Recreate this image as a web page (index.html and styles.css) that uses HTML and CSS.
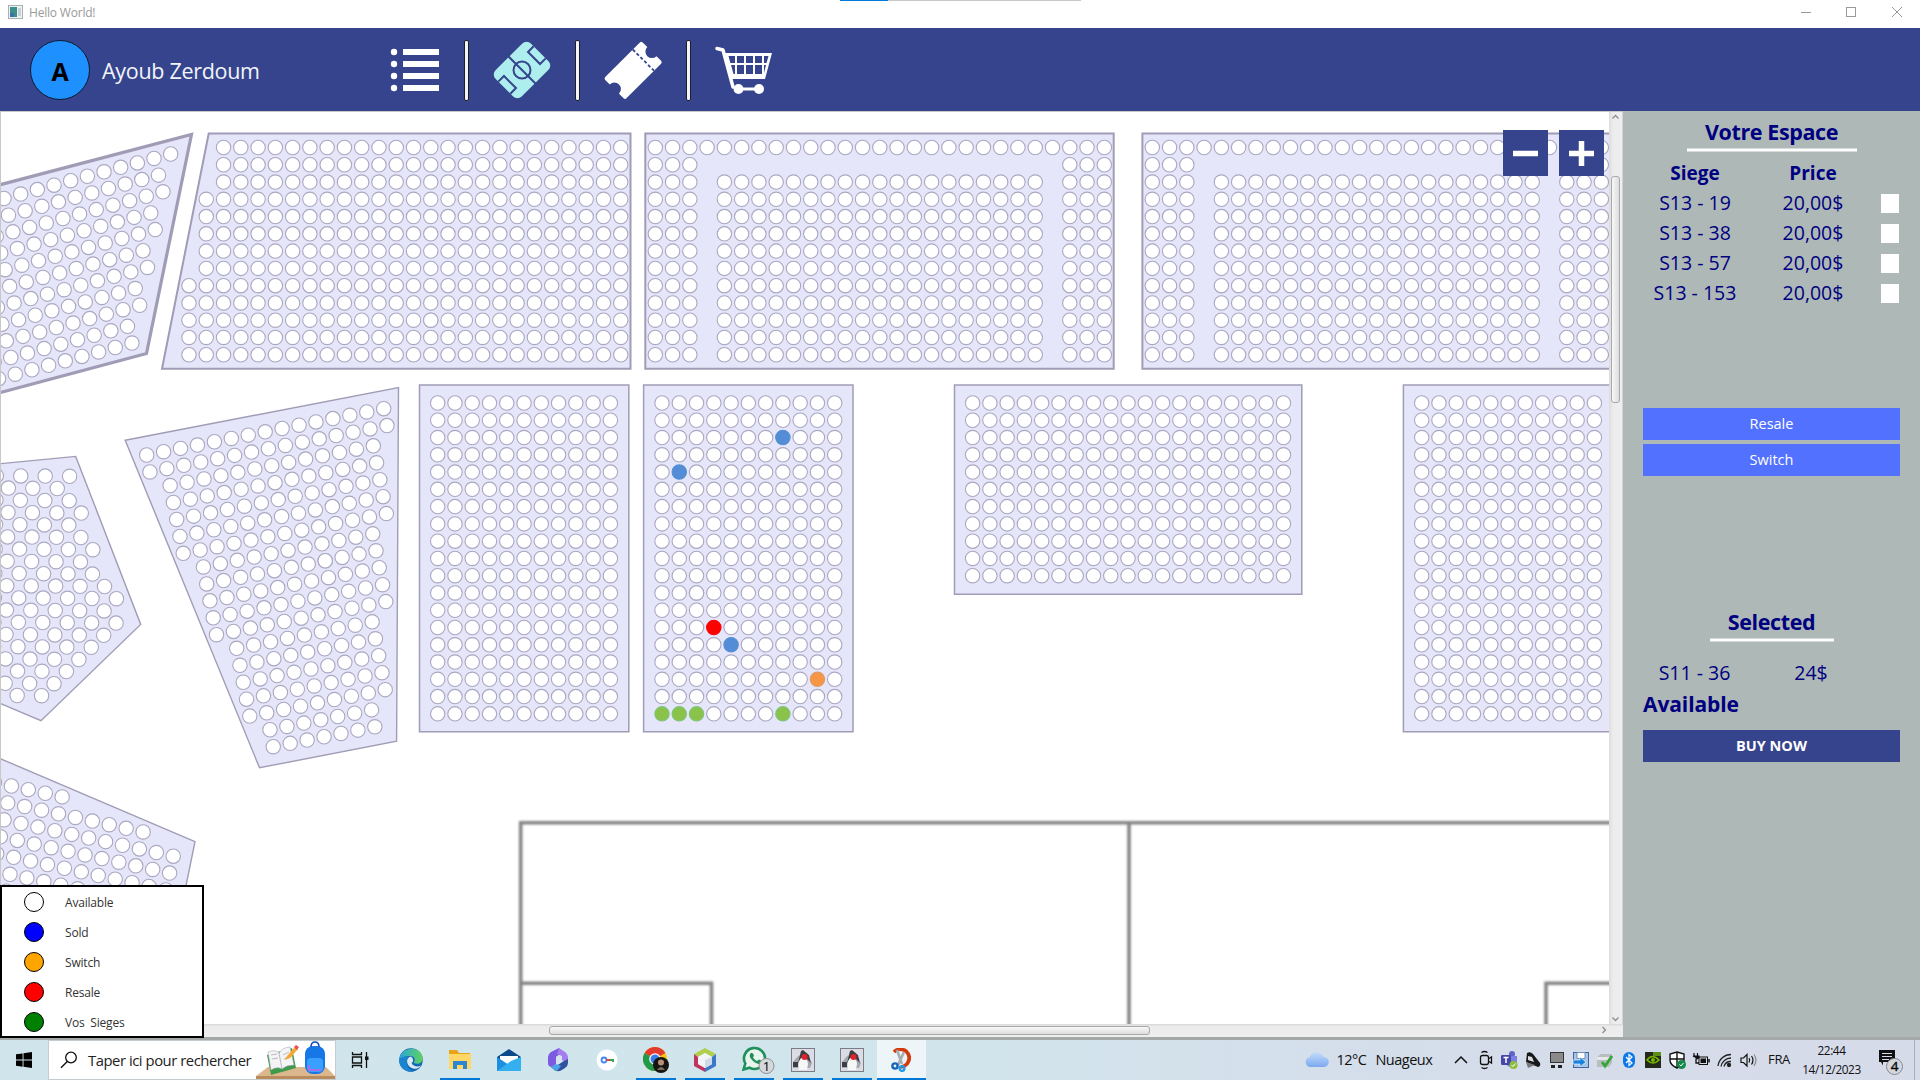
FILE: index.html
```html
<!DOCTYPE html>
<html lang="fr">
<head>
<meta charset="utf-8">
<title>Hello World!</title>
<link rel="stylesheet" href="styles.css">
</head>
<body>
<div class="window">
  <div class="titlebar">
    <div class="snip-strip"></div>
    <svg class="app-icon" width="16" height="15" viewBox="0 0 16 15"><rect x=".5" y=".5" width="14" height="13" fill="#eef1f2" stroke="#a9b0b3"/><rect x="2" y="2" width="7" height="10" fill="#3d8f8b"/><rect x="2" y="8" width="4" height="4" fill="#3c6fa8"/><rect x="10" y="3" width="3" height="8" fill="#c9d3d6"/></svg>
    <span class="title">Hello World!</span>
    <div class="controls">
      <svg width="46" height="24" viewBox="0 0 46 24"><path d="M19 12.500h10" stroke="#999"/></svg>
      <svg width="46" height="24" viewBox="0 0 46 24"><rect x="18.500" y="7.500" width="9" height="9" fill="none" stroke="#999"/></svg>
      <svg width="46" height="24" viewBox="0 0 46 24"><path d="M18 7l10 10M28 7l-10 10" stroke="#999"/></svg>
    </div>
  </div>

  <header class="header">
    <div class="avatar">A</div>
    <div class="user">Ayoub Zerdoum</div>
    <nav class="nav">
      <svg width="104" height="60" viewBox="0 0 104 60" fill="#fff"><circle cx="34" cy="12" r="3.200"/><circle cx="34" cy="24" r="3.200"/><circle cx="34" cy="36" r="3.200"/><circle cx="34" cy="48" r="3.200"/><path d="M43 9h36v6H43zM43 21h36v6H43zM43 33h36v6H43zM43 45h36v6H43z"/></svg>
      <span class="sep"></span>
      <svg width="106" height="60" viewBox="0 0 106 60"><g transform="translate(53 30) rotate(-45)"><rect x="-25" y="-18.500" width="50" height="37" rx="6" fill="#afeeee"/><g fill="none" stroke="#35448c" stroke-width="2"><path d="M0-19V-8.500M0 8.500V19M-25-8.500h8v17h-8M25-8.500h-8v17h8"/><circle r="8.500"/><path d="M0-8.500V8.500"/></g></g></svg>
      <span class="sep"></span>
      <svg width="106" height="60" viewBox="0 0 106 60"><g transform="translate(53.500 30) rotate(-45)"><path d="M-25-15H24q2 0 2 2V-6.500a6.500 6.500 0 0 0 0 13V13q0 2-2 2H-25q-2 0-2-2V6.500a6.500 6.500 0 0 0 0-13V-13q0-2 2-2z" fill="#fff"/><path d="M14-15V15" stroke="#35448c" stroke-width="1.800" stroke-dasharray="3.200 2.200"/></g></svg>
      <span class="sep"></span>
      <svg width="106" height="60" viewBox="0 0 106 60"><path d="M26 8.500l6 1.500 10 37" fill="none" stroke="#fff" stroke-width="3.500" stroke-linecap="round" stroke-linejoin="round"/><path d="M34 13h47l-7 26H41z" fill="#fff"/><g fill="#35448c"><path d="M37.500 16h6.500v7h-4.600zM46 16h7v7h-7zM55 16h7v7h-7zM64 16h7v7h-7zM73 16h4.500l-2 7H73zM40 25h4v9h-1.500zM46 25h7v9h-7zM55 25h7v9h-7zM64 25h7v9h-7zM73 25h2l-2 8z"/></g><path d="M46 49h20" stroke="#fff" stroke-width="3"/><circle cx="47.500" cy="49" r="5" fill="#fff"/><circle cx="68" cy="49" r="5" fill="#fff"/></svg>
    </nav>
  </header>

  <main class="main">
    <section class="map">
      <svg id="stadium" class="stadium" width="1608" height="912" viewBox="1 112 1608 912">
        <g class="field">
          <path d="M520.700 1040V822.700H1640M1129 822.700V1040M520.700 983.300H711.500V1040M1546 1040V983.300H1640"/>
        </g>
      </svg>
      <div class="vscroll">
        <svg width="13" height="10" viewBox="0 0 13 10"><path d="M3.500 6.500L6.500 3.500l3 3" fill="none" stroke="#8c8c8c" stroke-width="1.300"/></svg>
        <div class="vthumb"></div>
        <svg width="13" height="10" viewBox="0 0 13 10"><path d="M3.500 3.500L6.500 6.500l3-3" fill="none" stroke="#8c8c8c" stroke-width="1.300"/></svg>
      </div>
      <div class="hscroll">
        <div class="hthumb"></div>
        <svg width="10" height="12" viewBox="0 0 10 12"><path d="M3.500 3l3 3-3 3" fill="none" stroke="#8c8c8c" stroke-width="1.300"/></svg>
      </div>
      <div class="zoom">
        <button class="zoom-btn"><svg width="25" height="25"><path d="M0 12.500h25" stroke="#fff" stroke-width="5.500"/></svg></button>
        <button class="zoom-btn"><svg width="25" height="25"><path d="M0 12.500h25M12.500 0v25" stroke="#fff" stroke-width="5.500"/></svg></button>
      </div>
      <ul class="legend">
        <li><i class="dot available"></i>Available</li>
        <li><i class="dot sold"></i>Sold</li>
        <li><i class="dot switch"></i>Switch</li>
        <li><i class="dot resale"></i>Resale</li>
        <li><i class="dot mine"></i>Vos&nbsp; Sieges</li>
      </ul>
    </section>

    <aside class="side">
      <h2 class="heading space-title">Votre Espace</h2>
      <div class="rule wide"></div>
      <div class="seats">
        <b>Siege</b><b>Price</b><span></span>
        <span>S13 - 19</span><span>20,00$</span><i class="check"></i>
        <span>S13 - 38</span><span>20,00$</span><i class="check"></i>
        <span>S13 - 57</span><span>20,00$</span><i class="check"></i>
        <span>S13 - 153</span><span>20,00$</span><i class="check"></i>
      </div>
      <div class="actions">
        <button class="btn">Resale</button>
        <button class="btn">Switch</button>
      </div>
      <h2 class="heading selected-title">Selected</h2>
      <div class="rule narrow"></div>
      <div class="picked"><span>S11 - 36</span><span>24$</span></div>
      <div class="status">Available</div>
      <button class="btn buy">BUY NOW</button>
    </aside>
  </main>
</div>

<footer class="taskbar">
  <div class="start"><svg width="16" height="16" viewBox="0 0 16 16"><path d="M0 2.300L6.600 1.400V7.600H0zM7.500 1.200L16 0V7.600H7.500zM0 8.500H6.600V14.700L0 13.700zM7.500 8.500H16V16L7.500 14.800z"/></svg></div>
  <div class="search">
    <svg width="18" height="18" viewBox="0 0 18 18"><circle cx="11" cy="6.500" r="5.300" fill="none" stroke="#111" stroke-width="1.300"/><path d="M7.300 10.500L1 16.800" stroke="#111" stroke-width="1.400"/></svg>
    <span>Taper ici pour rechercher</span>
    <svg class="art" width="79" height="38" viewBox="0 0 79 38"><path d="M12 26h58l9 9v3H0v-3z" fill="#dcb78d"/><path d="M0 35h79v3H0z" fill="#b98c5e"/><path d="M11 14l25-7 4 20-25 7z" fill="#3f9a4b"/><path d="M12 11q8-3 11 1 4-6 11-6l4 18q-8 0-12 4-5-3-11 1z" fill="#f4f4f6" stroke="#aab" stroke-width=".6"/><path d="M23 12l3 16M15 14l6-1M16 18l6-1M27 14l6-3M28 18l6-3" stroke="#a9aab5" stroke-width=".8"/><path d="M29 19l2-4 8-9 3 2-8 9z" fill="#f6a72d"/><path d="M38 6l2-2 3 2-2 3z" fill="#e8505b"/><rect x="49" y="5" width="20" height="28" rx="8" fill="#1877e6"/><path d="M55 6q0-5 4-5t4 5" fill="none" stroke="#0b4fb8" stroke-width="1.500"/><rect x="51" y="17" width="16" height="14" rx="4" fill="#3aa0ff"/><path d="M53 24v5h12" fill="none" stroke="#cb5fe0" stroke-width="1.500"/></svg>
  </div>
  <div class="taskview"><svg width="18" height="16" viewBox="0 0 18 16"><path d="M1.500 0v2.500h9V0M1.500 16v-2.500h9V16M1.500 5h9v6h-9zM15.500 0v16" fill="none" stroke="#111" stroke-width="1.300"/><rect x="14" y="4.500" width="3.500" height="3.500" fill="#111"/></svg></div>

  <div class="app"><svg width="24" height="24" viewBox="0 0 24 24"><defs><linearGradient id="eg" x1="0" x2="1"><stop offset="0" stop-color="#2aa5dd"/><stop offset="1" stop-color="#5fd35c"/></linearGradient></defs><circle cx="12" cy="12" r="11.800" fill="#1467b4"/><path d="M.5 11C2-2 22-3 23.700 10c.3 5-5 7-9 5 2-3 1-7-3-7-5 0-9 1-11.200 3z" fill="url(#eg)"/><path d="M12 8.500c-6 1-5 10 2 12 4 1 7-1 8-3-3 2-8 1-9.500-2.500 2-1 2.500-4-.5-6.500z" fill="#d7e8ef"/><path d="M10 9c-5 4-2 13 5 14.500-6 1.500-14-2-14.800-10C1 9 6 8 10 9z" fill="#1b84d0"/></svg></div>
  <div class="app on"><svg width="24" height="22" viewBox="0 0 24 22"><path d="M1 1h8l2 3h11v8H1z" fill="#e8a317"/><path d="M1 5h22v15H1z" fill="#ffd766"/><path d="M5 12h14v8h-4v-4H9v4H5z" fill="#2e86d0"/></svg></div>
  <div class="app"><svg width="24" height="22" viewBox="0 0 24 22"><path d="M12 0l12 8v2H0V8z" fill="#0c4a8c"/><path d="M3 7h18v8H3z" fill="#fff"/><path d="M0 8l12 8 12-8v14H0z" fill="#1c8fe0"/><path d="M0 22l14-10 10-4v14z" fill="#34b0f0"/></svg></div>
  <div class="app"><svg width="22" height="24" viewBox="0 0 22 24"><path d="M12 0L4 4Q1 6 1 9v6q0 4 4 4l4-3V9l6-4z" fill="#7c5be0"/><path d="M12 0l6 4q3 2 3 5v6l-6-3V8l-5-2z" fill="#a57cf0"/><path d="M21 11v4q0 3-3 5l-4 2.500q-3 1.500-6 0L4 19h4l7-5z" fill="#31539f"/><path d="M4 19l5-3 5 2-4 5q-3-1-6-4z" fill="#4ca4e8"/><path d="M9 9l3-2 3 2v5l-3 2-3-1z" fill="#d5e5ee"/></svg></div>
  <div class="app"><svg width="22" height="22" viewBox="0 0 22 22"><circle cx="11" cy="11" r="10.500" fill="#fff"/><circle cx="8" cy="11" r="2.500" fill="none" stroke="#4285f4" stroke-width="1.800"/><path d="M10.500 11H14" stroke="#ea4335" stroke-width="2"/><path d="M14 11h3v2" fill="none" stroke="#34a853" stroke-width="2"/></svg></div>
  <div class="app on"><svg width="26" height="26" viewBox="0 0 26 26"><circle cx="12" cy="12" r="12" fill="#fbc116"/><path d="M12 12L1.600 6A12 12 0 0 1 22.400 6z" fill="#e33b2e"/><path d="M1.600 6A12 12 0 0 0 12 24l5-9-5-3z" fill="#229a4a"/><circle cx="12" cy="12" r="5.800" fill="#fff"/><circle cx="12" cy="12" r="4.500" fill="#3b7de8"/><circle cx="18" cy="18" r="8" fill="#16150f"/><circle cx="18" cy="15.500" r="3" fill="#b99076"/><path d="M14 23q4-6 8 0z" fill="#777060"/></svg></div>
  <div class="app on"><svg width="22" height="24" viewBox="0 0 22 24"><path d="M11 0l11 6-4 3-7-4-7 4-4-3z" fill="#b0cf4c"/><path d="M0 6l4 3v7l7 4v4L0 18z" fill="#c2335d"/><path d="M22 6l-4 3v7l-7 4v4l11-6z" fill="#3b78c9"/><path d="M11 5l7 4v7l-7 4-7-4V9z" fill="#f2f5f8"/><path d="M11 12l7-3v7l-7 4z" fill="#cfdbe6"/></svg></div>
  <div class="app on"><svg class="wa" width="34" height="28" viewBox="0 0 34 28"><path d="M1.500 23.500l1.800-6a10.500 10.500 0 1 1 4.200 4.200z" fill="#e8f4ee" stroke="#1f8f5b" stroke-width="2.600"/><path d="M8.500 7.500q2-2 3.500 2l-1 2q2 3 4 3.500l2-1.500q4 1.500 2 3.500-3 2.500-8-2t-2.500-7.500z" fill="#1f8f5b"/><circle cx="24.500" cy="20" r="7.500" fill="#d5d9db" stroke="#8a8f93"/><text x="24.500" y="24.500" text-anchor="middle" font-size="13">1</text></svg></div>
  <div class="app on"><svg width="24" height="24" viewBox="0 0 24 24"><rect x=".5" y=".5" width="23" height="23" fill="#dcdde4" stroke="#7a7d88"/><path d="M2 14l5-6 5-2 9 9-2 5H2z" fill="#a4a7ae"/><path d="M10 3l2-1 6 5 2 8-4-4-6 0-3 4z" fill="#3c3e44"/><path d="M2 14h5v5H2z" fill="#3c3e44"/><path d="M10 10q7 0 7 6l-1 6H8q-2-7 2-12z" fill="#f7f7f7"/><circle cx="13.500" cy="9" r="3" fill="#e0242a"/></svg></div>
  <div class="app on"><svg width="24" height="24" viewBox="0 0 24 24"><rect x=".5" y=".5" width="23" height="23" fill="#dcdde4" stroke="#7a7d88"/><path d="M2 14l5-6 5-2 9 9-2 5H2z" fill="#a4a7ae"/><path d="M10 3l2-1 6 5 2 8-4-4-6 0-3 4z" fill="#3c3e44"/><path d="M2 14h5v5H2z" fill="#3c3e44"/><path d="M10 10q7 0 7 6l-1 6H8q-2-7 2-12z" fill="#f7f7f7"/><circle cx="13.500" cy="9" r="3" fill="#e0242a"/></svg></div>
  <div class="app on active"><svg width="20" height="24" viewBox="0 0 20 24"><path d="M3 4Q8-1 15 3q6 6 1 13-3 3-6 3" fill="none" stroke="#d43a0b" stroke-width="3.600"/><path d="M6 2l5 14M13 4L7 17" stroke="#a8adb2" stroke-width="2.600"/><circle cx="4" cy="18" r="2.600" fill="none" stroke="#1565b8" stroke-width="2.400"/><circle cx="11" cy="20.500" r="2.400" fill="none" stroke="#1e9be8" stroke-width="2.400"/></svg></div>

  <div class="weather"><svg width="26" height="17" viewBox="0 0 26 17"><defs><linearGradient id="cl" x2="0" y2="1"><stop offset="0" stop-color="#c4dbfb"/><stop offset="1" stop-color="#7ba9ee"/></linearGradient></defs><path d="M6 16a5 5 0 0 1-.5-9.800A7.500 7.500 0 0 1 19.500 6 5 5 0 0 1 20 16z" fill="url(#cl)"/></svg><span>12°C</span><span class="sky">Nuageux</span></div>
  <div class="tray">
    <svg viewBox="0 0 24 24"><path d="M6 15l6-6 6 6" fill="none" stroke="#111" stroke-width="1.500"/></svg>
    <svg viewBox="0 0 24 24" fill="none" stroke="#111" stroke-width="1.300"><rect x="7.500" y="7.500" width="8" height="9" rx="2"/><path d="M16 10.500l2.500-1.500v6L16 13.500M8.500 4.500q3-2 6 0M8.500 19.500q3 2 6 0"/></svg>
    <svg viewBox="0 0 24 24"><circle cx="15" cy="6" r="3" fill="#6264c7"/><path d="M10 8h10v6q-1 5-6 5-4 0-5-4z" fill="#7b7fe0"/><rect x="4" y="7" width="10" height="10" rx="1" fill="#4447a8"/><path d="M6.500 9.500h5M9 9.500V15" stroke="#fff" stroke-width="1.500"/><circle cx="16.500" cy="17" r="4" fill="#8cbd3c"/><path d="M14.500 17l1.500 1.500 2.500-3" fill="none" stroke="#fff"/></svg>
    <svg viewBox="0 0 24 24"><path d="M6 5q3-2 6 1l7 9q1 3-2 4L5 14z" fill="#16181b"/><path d="M7 8l4 1 2 5-6-2z" fill="#ddd"/><path d="M5 14l9 3-7 3z" fill="#777"/></svg>
    <svg viewBox="0 0 24 24"><rect x="5.500" y="4.500" width="13" height="10" fill="#8a8a8a" stroke="#333"/><path d="M6 17h4v3H6zM13 17h4v3h-4z" fill="#222"/></svg>
    <svg viewBox="0 0 24 24"><rect x="4.500" y="4.500" width="15" height="15" fill="#a9c4e6" stroke="#3f66a0"/><path d="M8 4.500h8v6H8z" fill="#fff" stroke="#6f8fbd"/><path d="M4 12h7V9l6 5-6 5v-3H4z" fill="#1884e0" stroke="#fff" stroke-width=".6"/></svg>
    <svg viewBox="0 0 24 24"><path d="M4 9l4-3h11v9l-3 4H4z" fill="#b9bdbf"/><path d="M4 9h12v3H4z" fill="#e6e8e8"/><path d="M9 14l3 4 7-10" fill="none" stroke="#33a636" stroke-width="2.800"/></svg>
    <svg viewBox="0 0 24 24"><rect x="6" y="4" width="12" height="16" rx="6" fill="#0a78e8"/><path d="M9 9l6 6-3 2.500V6.500L15 9l-6 6" fill="none" stroke="#fff" stroke-width="1.200"/></svg>
    <svg viewBox="0 0 24 24"><rect x="4" y="4" width="16" height="16" fill="#222a1c"/><path d="M6 12q5-7 12 0-6 6-12 0z" fill="none" stroke="#76b900" stroke-width="1.600"/><circle cx="12" cy="12" r="2" fill="#76b900"/><path d="M12 4h8v4h-8z" fill="#5d8d17"/></svg>
    <svg viewBox="0 0 24 24"><path d="M12 4l7 2v6q0 5-7 8-7-3-7-8V6z" fill="#fff" stroke="#111" stroke-width="1.400"/><path d="M12 4v16M5 11h14" stroke="#111" stroke-width="1.400"/><circle cx="16.500" cy="16.500" r="4.500" fill="#13894a"/><path d="M14.500 16.500l1.500 1.500 2.500-3" fill="none" stroke="#fff"/></svg>
    <svg viewBox="0 0 24 24"><path d="M5 5v3M8.500 5v3M4 8h6v1.500q-3 3-3 0z" fill="#111" stroke="#111" stroke-width="1.200"/><path d="M7 11v4h3" fill="none" stroke="#111" stroke-width="1.300"/><rect x="10" y="9" width="8.500" height="7.500" fill="none" stroke="#111"/><rect x="11.500" y="10.500" width="5.500" height="4.500" fill="#111"/><path d="M20 11v3.500" stroke="#111" stroke-width="1.500"/></svg>
    <svg viewBox="0 0 24 24" fill="none" stroke="#222" stroke-width="1.300"><path d="M5 18A13 13 0 0 1 18 6.500M8 18.500A10 10 0 0 1 18 10M11 18.500A7 7 0 0 1 18 13.500"/><circle cx="16" cy="17" r="1.500" fill="#222"/></svg>
    <svg viewBox="0 0 24 24" fill="none" stroke="#111" stroke-width="1.200"><path d="M4 10v4.500h2.500L10 18V6.500L6.500 10zM12 10q1.500 2 0 4.500M14.500 8q3 4 0 8.500"/><path d="M17 6.500q4 5.500 0 11.500" stroke="#888"/></svg>
  </div>
  <div class="lang">FRA</div>
  <div class="clock"><span>22:44</span><span>14/12/2023</span></div>
  <div class="notif"><svg width="28" height="28" viewBox="0 0 28 28"><path d="M2 2h16v12H6v3.500L4 14H2z" fill="#111"/><path d="M5 5.500h10M5 8.500h10M5 11.500h7" stroke="#d6dce9" stroke-width="1.200"/><circle cx="17.500" cy="18.500" r="8" fill="#d3d7dc" stroke="#85898e"/><text x="17.500" y="23.300" text-anchor="middle" font-size="13.500" stroke="#111" stroke-width=".4">4</text></svg></div>
</footer>
<script src="stadium.js"></script>
</body>
</html>
```
FILE: styles.css
```css
* { box-sizing: border-box; }
body {
  margin: 0;
  width: 1920px;
  height: 1080px;
  overflow: hidden;
  display: flex;
  flex-direction: column;
  background: #fff;
  font-family: "Open Sans", "Noto Sans", sans-serif;
}
svg { display: block; flex: none; }
button { border: 0; padding: 0; font-family: inherit; }

.window {
  height: 1040px;
  display: flex;
  flex-direction: column;
  border-bottom: 3px solid #a5a8a8;
}

.titlebar { position: relative; height: 28px; display: flex; align-items: flex-start; padding-left: 8px; color: #999; }
.app-icon { margin-top: 5px; }
.title { margin: 4px 0 0 5px; font-size: 12px; line-height: 17px; letter-spacing: -.2px; }
.controls { display: flex; margin-left: auto; }
.snip-strip { position: absolute; top: 0; left: 840px; width: 241px; height: 1px; background: linear-gradient(90deg, #0078d7 48px, #c9c9c9 48px); }

.header { height: 83px; display: flex; align-items: flex-start; padding: 12px 0 0 30px; background: #35448c; }
.avatar { width: 60px; height: 60px; border: 1px solid #0b1b33; border-radius: 50%; background: #1e90ff; text-align: center; font-weight: 700; font-size: 25px; line-height: 61px; }
.user { width: 258px; margin-left: 12px; color: #f2f4fa; font-size: 21.500px; line-height: 61px; letter-spacing: -.3px; }
.nav { display: flex; }
.sep { width: 5px; height: 61px; background: #f4f4f4; border: 1px solid #1c1e2b; border-radius: 2px; }

.main { height: 926px; display: flex; }
.map {
  position: relative;
  width: 1623px;
  display: grid;
  grid-template: 912px 13px / 1608px 14px;
  border: 1px solid #c8c8c8;
  border-width: 1px 0 0 1px;
}
.stadium { background: #fff; }
.field { fill: none; stroke: #858585; stroke-width: 3.6px; filter: blur(1.2px); }
.section { fill: #e6e6fa; stroke: #a09cb5; }
.seat { fill: #fff; stroke: #aaa7c0; stroke-width: 1.1px; }
.seat.sold { fill: #538dd5; stroke: #538dd5; }
.seat.resale { fill: #f00; stroke: #f00; }
.seat.switch { fill: #f79646; stroke: #e09a66; }
.seat.mine { fill: #8bc34a; stroke: #7cc47b; }

.vscroll { height: 912px; display: flex; flex-direction: column; background: linear-gradient(90deg, #dcdcdc, #ececec 30%, #eee); border-right: 1px solid #d4d4d4; }
.vscroll svg:last-child { margin-top: auto; }
.vthumb { width: 9px; height: 227px; margin: 54px 0 0 2px; border: 1px solid #a9a9a9; border-radius: 3px; background: linear-gradient(90deg, #f8f8f8, #dcdcdc); }
.hscroll { grid-column: 1 / 3; display: flex; background: linear-gradient(#d8d8d8, #ececec 20%, #eee); }
.hthumb { width: 601px; height: 9px; margin: 2px 0 0 548px; border: 1px solid #a9a9a9; border-radius: 3px; background: linear-gradient(#f8f8f8, #dcdcdc); }
.hscroll svg { margin-left: 449px; }

.zoom { position: absolute; left: 1502px; top: 18px; display: flex; gap: 11px; }
.zoom-btn { width: 45px; height: 46px; display: grid; place-items: center; background: #35448c; }

.legend { position: absolute; left: -1px; bottom: -1px; width: 204px; height: 153px; margin: 0; padding: 0 0 0 22px; border: 2px solid #000; background: #fff; list-style: none; font-size: 12px; color: #333; }
.legend li { height: 30px; display: flex; align-items: center; letter-spacing: -.2px; }
.dot { width: 20px; height: 20px; margin-right: 21px; border: 1px solid #000; border-radius: 50%; }
.available { background: #fff; }
.dot.sold { background: #00f; }
.dot.switch { background: #ffa500; }
.dot.resale { background: #f00; }
.dot.mine { background: #008000; }

.side { width: 297px; display: flex; flex-direction: column; padding: 6px 20px 0; background: #aeb9b7; color: #000080; }
.heading { margin: 0; height: 30px; line-height: 30px; text-align: center; font-size: 21.500px; font-weight: 700; letter-spacing: -.4px; }
.rule { align-self: center; height: 4px; background: #fff; border: solid #d6dcdb; border-width: 1px 0; }
.wide { width: 170px; margin-top: 1px; }
.narrow { width: 124px; margin-top: 1px; }
.seats { height: 250px; margin-top: 6px; display: grid; grid-template-columns: 104px 132px 21px; grid-auto-rows: 30px; text-align: center; font-size: 19.500px; line-height: 30px; }
.seats b { font-size: 19px; }
.check { width: 18px; height: 19px; margin: 6px 0 0 2px; background: #fff; }
.actions { display: flex; flex-direction: column; gap: 4px; }
.btn { height: 32px; width: 257px; padding-bottom: 2px; background: #5271ff; color: #fff; font-size: 14.500px; flex: none; }
.space-title { flex: none; }
.selected-title { flex: none; margin-top: 131px; }
.narrow { margin-top: 1px; }
.picked { height: 31px; margin-top: 15px; display: grid; grid-template-columns: 103px 130px; text-align: center; font-size: 19.500px; line-height: 31px; }
.status { height: 32px; font-size: 21px; line-height: 32px; font-weight: 700; letter-spacing: -.1px; }
.buy { margin-top: 10px; background: #35448c; font-weight: 700; }

.taskbar { height: 40px; display: flex; align-items: stretch; background: linear-gradient(90deg, #cfe5eb, #d1e5ec 45%, #d5dcea 80%, #d6dbe9); color: #111; font-size: 14.500px; }
.start { width: 48px; display: grid; place-items: center; }
.search { width: 288px; display: flex; align-items: center; padding-left: 11px; border: 1px solid #c4ccd0; background: #fff; font-size: 14.800px; }
.search span { width: 173px; margin-left: 10px; white-space: nowrap; letter-spacing: -.45px; color: #222; }
.search .art { margin-left: -4px; }
.taskview { width: 50.500px; display: grid; place-items: center; }
.taskview svg { margin-right: 2px; }
.app { width: 49px; display: grid; place-items: center; background: linear-gradient(#0078d7, #0078d7) 50% 100% / 0 2px no-repeat; }
.app.on { background-size: 40px 2px; }
.app.active { background-color: #eef5f8; background-size: 49px 2px; }
.wa { margin-left: 10px; }
.weather { width: 523.500px; display: flex; align-items: center; padding: 0 0 2px 378px; white-space: nowrap; letter-spacing: -.5px; }
.weather span { margin-left: 7px; }
.weather .sky { margin-left: 9px; }
.tray { display: flex; align-items: center; }
.tray svg { width: 24px; height: 24px; }
.lang { width: 36px; text-align: center; line-height: 39px; font-size: 13px; letter-spacing: -.4px; }
.clock { width: 71px; display: flex; flex-direction: column; margin-left: -1px; margin-right: 1px; text-align: center; padding-top: 1px; font-size: 11.800px; line-height: 19px; letter-spacing: -.4px; }
.notif { width: 47px; display: grid; place-items: center; padding-top: 3px; border-right: 1px solid #aab0ba; }
```
FILE: stadium.js
```js
const NS = 'http://www.w3.org/2000/svg';
const svg = document.getElementById('stadium');

function add(name, attrs) {
  const el = document.createElementNS(NS, name);
  for (const key in attrs) el.setAttribute(key, attrs[key]);
  svg.appendChild(el);
}
function block(points, width) {
  add('polygon', { class: 'section', points, 'stroke-width': width });
}
function seat(x, y, kind) {
  add('circle', { class: 'seat ' + (kind || ''), cx: x.toFixed(2), cy: y.toFixed(2), r: 7.2 });
}
function rect(x1, y1, x2, y2, width) {
  block(`${x1},${y1} ${x2},${y1} ${x2},${y2} ${x1},${y2}`, width);
}

const STEP = 17.27;

// Slanted corner block, rows shorten towards the pitch
block('-20,190 191.500,134.500 146.500,353.500 -20,398', 3.2);
for (let r = 0; r <= 10; r++) {
  for (let c = Math.ceil(r / 2); c < 14; c++) seat(170.7 - 16.67 * c + 4.46 * r, 154 + 4.45 * c + 16.68 * r);
}

// Upper stand
block('208.700,133.500 630.500,133.500 630.500,368.700 162,368.700', 2);
for (let r = 0; r < 13; r++) {
  for (let c = r < 3 ? 2 : r < 8 ? 1 : 0; c < 26; c++) seat(189 + STEP * c, 147.5 + STEP * r);
}
seat(189 + STEP * 14, 147.5 + STEP * 10);
for (const [left, first] of [[645.3, 655.3], [1142.4, 1152.3]]) {
  rect(left, 133.5, left + 468.4, 368.7, 2);
  for (let r = 0; r < 13; r++) {
    for (let c = 0; c < 27; c++) {
      const aisle = (r === 1 && c > 2 && c < 24) || (r > 1 && (c === 3 || c === 23));
      if (!aisle) seat(first + STEP * c, 147.5 + STEP * r);
    }
  }
  seat(first + STEP * 15, 147.5 + STEP * 10);
}

// Lower corner block: first and last seat of each row
block('125.200,440.300 398.500,387.500 396.600,741.200 259.500,767.800', 1.4);
const span = [[0, 14], [0, 14], [1, 13], [1, 13], [1, 13], [1, 13], [1, 13], [2, 12], [2, 12], [2, 12], [2, 12], [2, 12],
  [3, 11], [3, 11], [3, 11], [3, 11], [3, 11], [4, 10], [4, 10]];
span.forEach(([from, to], r) => {
  for (let c = from; c <= to; c++) seat(146.67 + 16.93 * c + 3.27 * r, 455 - 3.31 * c + 16.94 * r);
});
seat(146.67 + 16.93 * 9 + 3.27 * 8, 455 - 3.31 * 9 + 16.94 * 8);

// Left block with staggered seats
block('-20,465.700 75.700,456.400 140.700,624.400 41,720.700 -20,695', 1.4);
[2, 2, 2, 3, 2, 3, 3, 3, 3, 4, 4, 4, 4, 4, 3, 3, 2, 2, 1].forEach((last, r) => {
  for (let c = -1; c <= last; c++) seat(20.75 - 0.2 * r - (r % 2 ? 12.17 : 0) + 24.43 * c, 475.9 + 12.2 * r + 0.2 * c);
});

// Bottom-left block
block('-20,750 195,841.700 180,915 -20,915', 1.4);
[3, 8, 10, 10, 10, 10, 10].forEach((last, r) => {
  for (let c = -1; c <= last; c++) seat(11.4 + 16.92 * c - 3.67 * r, 786 + 3.63 * c + 16.93 * r);
});

// Lower stand
const states = { '7,2': 'sold', '1,4': 'sold', '3,13': 'resale', '4,14': 'sold', '9,16': 'switch',
  '0,18': 'mine', '1,18': 'mine', '2,18': 'mine', '7,18': 'mine' };
const stands = [
  [419.5, 628.8, 731.7, 437.7, 11, 19, {}],
  [643.6, 853, 731.7, 662, 11, 19, states],
  [954.5, 1301.8, 594.3, 972.6, 19, 11, {}],
  [1403.4, 1613, 731.7, 1421.7, 11, 19, {}]
];
for (const [x1, x2, y2, first, cols, rows, kinds] of stands) {
  rect(x1, 385, x2, y2, 1.5);
  for (let r = 0; r < rows; r++) {
    for (let c = 0; c < cols; c++) seat(first + STEP * c, 403 + STEP * r, kinds[c + ',' + r]);
  }
}
seat(662 + STEP * 2, 403 + STEP * 11);
```
